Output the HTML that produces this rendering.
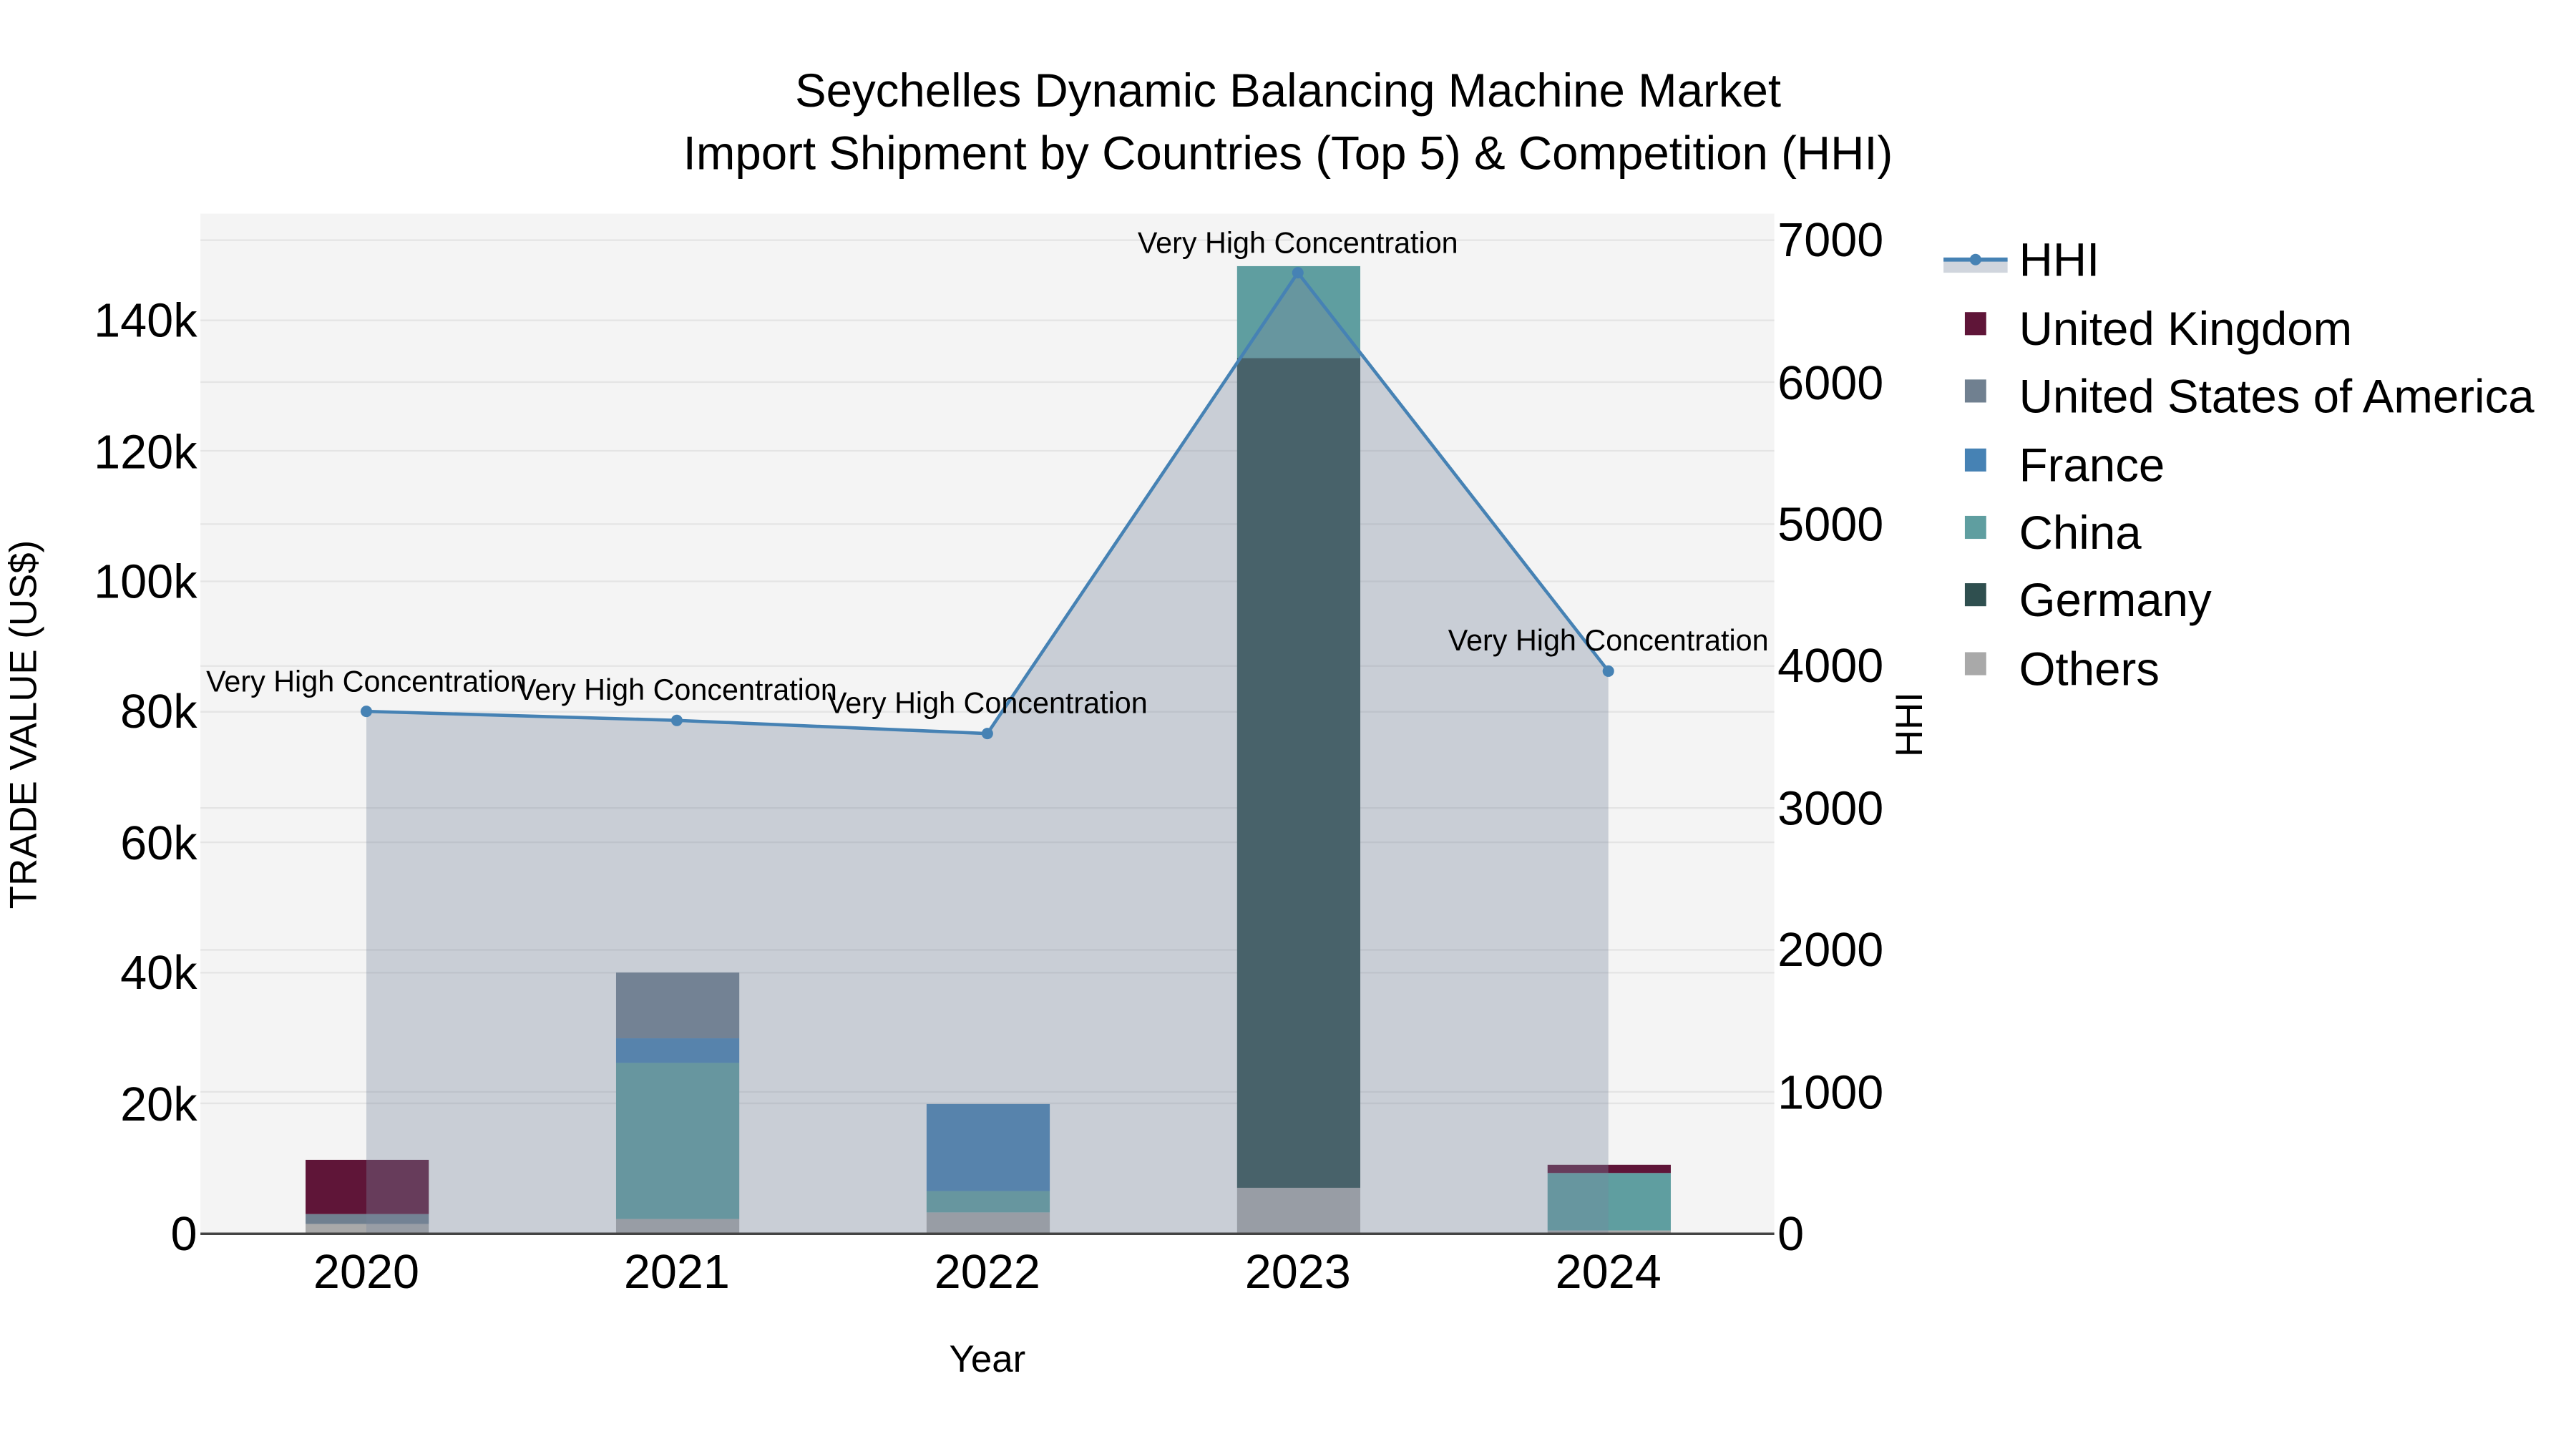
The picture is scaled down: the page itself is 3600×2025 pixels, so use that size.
<!DOCTYPE html>
<html><head><meta charset="utf-8"><style>html,body{margin:0;padding:0;background:#fff}svg{display:block}</style></head><body>
<svg width="3600" height="2025" viewBox="0 0 1568 882" preserveAspectRatio="none" xmlns="http://www.w3.org/2000/svg" font-family="'Liberation Sans', sans-serif">
<rect width="1568" height="882" fill="#fff"/>
<rect x="122" y="130" width="958" height="621" fill="#f4f4f4"/>
<g stroke="#e4e4e4" stroke-width="1">
<line x1="122" x2="1080" y1="671.6" y2="671.6"/><line x1="122" x2="1080" y1="592.1" y2="592.1"/><line x1="122" x2="1080" y1="512.7" y2="512.7"/><line x1="122" x2="1080" y1="433.3" y2="433.3"/><line x1="122" x2="1080" y1="353.9" y2="353.9"/><line x1="122" x2="1080" y1="274.4" y2="274.4"/><line x1="122" x2="1080" y1="195" y2="195"/>
<line x1="122" x2="1080" y1="664.6" y2="664.6"/><line x1="122" x2="1080" y1="578.2" y2="578.2"/><line x1="122" x2="1080" y1="491.8" y2="491.8"/><line x1="122" x2="1080" y1="405.4" y2="405.4"/><line x1="122" x2="1080" y1="319" y2="319"/><line x1="122" x2="1080" y1="232.6" y2="232.6"/><line x1="122" x2="1080" y1="146.2" y2="146.2"/>
</g>
<rect x="186" y="745" width="75" height="6" fill="#a9a9a9"/>
<rect x="186" y="739" width="75" height="6" fill="#708090"/>
<rect x="186" y="706" width="75" height="33" fill="#5f1538"/>
<rect x="375" y="742" width="75" height="9" fill="#a9a9a9"/>
<rect x="375" y="647" width="75" height="95" fill="#5f9ea0"/>
<rect x="375" y="632" width="75" height="15" fill="#4682b4"/>
<rect x="375" y="592" width="75" height="40" fill="#708090"/>
<rect x="564" y="738" width="75" height="13" fill="#a9a9a9"/>
<rect x="564" y="725" width="75" height="13" fill="#5f9ea0"/>
<rect x="564" y="672" width="75" height="53" fill="#4682b4"/>
<rect x="753" y="723" width="75" height="28" fill="#a9a9a9"/>
<rect x="753" y="218" width="75" height="505" fill="#2f4f4f"/>
<rect x="753" y="162" width="75" height="56" fill="#5f9ea0"/>
<rect x="942" y="749" width="75" height="2" fill="#a9a9a9"/>
<rect x="942" y="714" width="75" height="35" fill="#5f9ea0"/>
<rect x="942" y="709" width="75" height="5" fill="#5f1538"/>
<path d="M223,751 L223,433 L412,438.5 L601,446.5 L790,166 L979,408.5 L979,751 Z" fill="rgba(121,135,158,0.35)"/>
<line x1="122" x2="1080" y1="751" y2="751" stroke="#444" stroke-width="1.5"/>
<polyline points="223,433 412,438.5 601,446.5 790,166 979,408.5" fill="none" stroke="#4682b4" stroke-width="2"/>
<g fill="#4682b4"><circle cx="223" cy="433" r="3.5"/><circle cx="412" cy="438.5" r="3.5"/><circle cx="601" cy="446.5" r="3.5"/><circle cx="790" cy="166" r="3.5"/><circle cx="979" cy="408.5" r="3.5"/></g>
<g font-size="18" text-anchor="middle" fill="#000">
<text x="223" y="421">Very High Concentration</text>
<text x="412" y="426">Very High Concentration</text>
<text x="601" y="434">Very High Concentration</text>
<text x="790" y="154">Very High Concentration</text>
<text x="979" y="396">Very High Concentration</text>
</g>
<g font-size="29" text-anchor="end" fill="#000">
<text x="120" y="761">0</text><text x="120" y="682">20k</text><text x="120" y="602">40k</text><text x="120" y="523">60k</text><text x="120" y="443">80k</text><text x="120" y="364">100k</text><text x="120" y="285">120k</text><text x="120" y="205">140k</text>
</g>
<g font-size="29" fill="#000">
<text x="1082" y="761">0</text><text x="1082" y="675">1000</text><text x="1082" y="588">2000</text><text x="1082" y="502">3000</text><text x="1082" y="415">4000</text><text x="1082" y="329">5000</text><text x="1082" y="243">6000</text><text x="1082" y="156">7000</text>
</g>
<g font-size="29" text-anchor="middle" fill="#000">
<text x="223" y="784">2020</text><text x="412" y="784">2021</text><text x="601" y="784">2022</text><text x="790" y="784">2023</text><text x="979" y="784">2024</text>
</g>
<text x="601" y="835" font-size="23" text-anchor="middle">Year</text>
<text transform="translate(22,441) rotate(-90)" font-size="23" text-anchor="middle">TRADE VALUE (US$)</text>
<text transform="translate(1170,441) rotate(-90)" font-size="23" text-anchor="middle">HHI</text>
<g font-size="28.5" text-anchor="middle">
<text x="784" y="65">Seychelles Dynamic Balancing Machine Market</text>
<text x="784" y="103">Import Shipment by Countries (Top 5) &amp; Competition (HHI)</text>
</g>
<rect x="1183" y="158" width="39" height="8" fill="rgba(121,135,158,0.35)"/>
<line x1="1183" x2="1222" y1="158" y2="158" stroke="#4682b4" stroke-width="2.5"/>
<circle cx="1202.5" cy="158" r="3.5" fill="#4682b4"/>
<rect x="1196" y="190" width="13" height="14" fill="#5f1538"/>
<rect x="1196" y="231" width="13" height="14" fill="#708090"/>
<rect x="1196" y="273" width="13" height="14" fill="#4682b4"/>
<rect x="1196" y="314" width="13" height="14" fill="#5f9ea0"/>
<rect x="1196" y="355" width="13" height="14" fill="#2f4f4f"/>
<rect x="1196" y="397" width="13" height="14" fill="#a9a9a9"/>
<g font-size="28.5" fill="#000">
<text x="1229" y="168">HHI</text>
<text x="1229" y="210">United Kingdom</text>
<text x="1229" y="251">United States of America</text>
<text x="1229" y="293">France</text>
<text x="1229" y="334">China</text>
<text x="1229" y="375">Germany</text>
<text x="1229" y="417">Others</text>
</g>
</svg>
</body></html>
